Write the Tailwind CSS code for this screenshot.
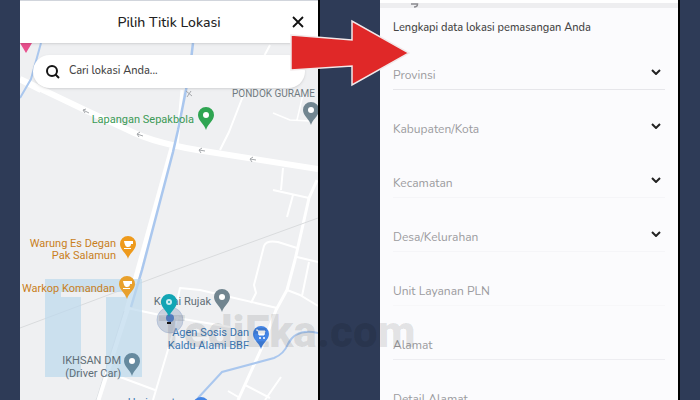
<!DOCTYPE html>
<html lang="id">

<head>
    <meta charset="UTF-8">
    <title>Pilih Titik Lokasi</title>
    <script src="https://cdn.jsdelivr.net/npm/@tailwindcss/browser@4"></script>
</head>

<body class="relative h-screen overflow-hidden bg-[#2e3b57] flex gap-[60px] px-5 font-[Nunito,'Open_Sans',sans-serif]">

    <!-- Map screen -->
    <section class="flex-1 min-w-0 flex flex-col bg-white border-r-2 border-black overflow-hidden">
        <header class="relative z-10 shrink-0 h-[43px] flex items-center justify-between px-3 bg-white border-t border-gray-300 shadow">
            <span class="w-4"></span>
            <h1 class="text-[14px] font-medium text-[#222]">Pilih Titik Lokasi</h1>
            <button type="button" aria-label="Tutup" class="w-4 h-4">
                <svg viewBox="0 0 16 16" class="w-4 h-4" fill="none" stroke="#111" stroke-width="1.8">
                    <path d="M3 3L13 13M13 3L3 13" />
                </svg>
            </button>
        </header>

        <div class="relative flex-1 min-h-0 bg-[#eff0f2]">
            <svg viewBox="20 43 298 357" preserveAspectRatio="xMidYMin slice" class="absolute inset-0 w-full h-full" font-family="Roboto, sans-serif" font-size="11">
                <defs>
                    <path id="pin" d="M0 15C-1.500 9 -8 6 -8 0A8 8 0 1 1 8 0C8 6 1.500 9 0 15Z" />
                    <path id="cup" d="M-4 -3H5V0H3C3 2 2 3 0 3S-3 2 -4 -3ZM-4 4H3V5H-4Z" fill="#fff" />
                </defs>

                <!-- roads -->
                <g fill="none" stroke="#fff" stroke-width="2" stroke-linejoin="round">
                    <path d="M20 79L85 110L128 130Q155 144 210 152L318 169" stroke-width="6" />
                    <path d="M172 148L138 270L127 310L98 400" stroke-width="5" />
                    <path d="M182 90L177 145" stroke-width="3" />
                    <path d="M270 45L243 96L229 132L220 150M283 168L281 190M273 190L309 198M293 195L287 217" />
                    <path d="M317 180L309 198L295 260L287 290L276 310L263 345L238 400" stroke-width="3" />
                    <path d="M297 248L278 242Q266 240 264 246L254 285L256 293L251 303M297 257L318 262" />
                    <path d="M177 302L180 288L200 290L277 308M287 290L300 295L318 306M302 296L309 262" />
                    <path d="M127 308L160 315L230 327M178 316L153 400M120 377L155 390M228 391L240 398M245 385L270 398M281 377L265 400" />
                    <path d="M273 113L290 120L310 121M297 120L304 90M20 82L40 92M290 43L318 60" stroke-width="1.500" />
                </g>
                <path d="M318 218L175 270L20 328" fill="none" stroke="#d9dbdd" />
                <path d="M124 311L96 400" fill="none" stroke="#dfe2e5" />

                <!-- water -->
                <g fill="none" stroke="#aac7ee" stroke-width="2">
                    <path d="M41 43L31 79L20 98" />
                    <path d="M193 43L191 60L186 90L178 130L173 152L142 270L131 307" stroke-width="2.500" />
                    <path d="M198 398L222 372L274 358Q284 354 288 344Q296 328 318 333" />
                </g>

                <!-- one-way arrows -->
                <g fill="none" stroke="#a5a8ac">
                    <path d="M89 113L83 110M86 109L83 110L85 113M143 136L137 134M140 132L137 134L139 137M205 151L199 150M202 148L199 150L201 153M256 160L250 159M253 157L250 159L252 162" />
                    <path d="M186 91L192 96M191 91L187 97" />
                </g>

                <!-- T logo -->
                <path d="M45 279H142V377H106V297H125V292H61V297H81V377H45Z" fill="#bcd9ec" fill-opacity=".7" />

                <path d="M20 43H32L26 53Z" fill="#e8508d" />

                <!-- places -->
                <g text-anchor="end">
                    <text x="194" y="123" fill="#3b9a55">Lapangan Sepakbola</text>
                    <text x="232" y="97" font-size="10" fill="#6f7a80" text-anchor="start">PONDOK GURAME</text>
                    <g fill="#c97f1c">
                        <text x="116" y="247">Warung Es Degan</text>
                        <text x="116" y="259">Pak Salamun</text>
                        <text x="115" y="292">Warkop Komandan</text>
                    </g>
                    <g fill="#5f6e77">
                        <text x="211" y="305">Kedai Rujak</text>
                        <text x="121" y="364">IKHSAN DM</text>
                        <text x="121" y="377">(Driver Car)</text>
                    </g>
                    <g fill="#3c78b4">
                        <text x="249" y="336">Agen Sosis Dan</text>
                        <text x="249" y="349">Kaldu Alami BBF</text>
                        <text x="193" y="406">Harjasantosa</text>
                    </g>
                </g>

                <g transform="translate(206 115)">
                    <use href="#pin" fill="#2fa552" />
                    <circle r="3" fill="#fff" />
                </g>
                <g transform="translate(311 110)">
                    <use href="#pin" fill="#718590" />
                    <circle r="3" fill="#fff" />
                </g>
                <g transform="translate(128 244)">
                    <use href="#pin" fill="#ee9a1c" />
                    <use href="#cup" />
                </g>
                <g transform="translate(127 284)">
                    <use href="#pin" fill="#e8a02c" />
                    <use href="#cup" />
                </g>
                <g transform="translate(222 297)">
                    <use href="#pin" fill="#718590" />
                    <circle r="3" fill="#fff" />
                </g>
                <g transform="translate(132 361)">
                    <use href="#pin" fill="#668a9f" />
                    <circle r="3" fill="#fff" />
                </g>
                <g transform="translate(261 334)">
                    <use href="#pin" fill="#4384e4" />
                    <path d="M-5 -4H-3L-2 1H3L4 -3H-2" fill="#fff" stroke="#fff" />
                    <circle cx="-1" cy="4" r="1" fill="#fff" />
                    <circle cx="3" cy="4" r="1" fill="#fff" />
                </g>
                <use href="#pin" x="201" y="405" fill="#4384e4" />

                <!-- selected point -->
                <circle cx="170" cy="320" r="13" fill="#9aa9c4" fill-opacity=".45" stroke="#a9b9d4" stroke-opacity=".7" />
                <circle cx="170" cy="318" r="4" fill="#5b87cf" />
                <path d="M167 322H171V324H167Z" fill="#151515" />
                <g transform="translate(169 302)">
                    <use href="#pin" fill="#12a5b4" />
                    <circle r="3" fill="#c9eef2" />
                    <circle r="1" fill="#12a5b4" />
                </g>
            </svg>

            <label class="relative mt-3 mx-[13px] h-[33px] flex items-center gap-2 px-3 rounded-full bg-white shadow">
                <svg viewBox="0 0 16 16" class="w-4 h-4 shrink-0" fill="none" stroke="#151515" stroke-width="2">
                    <circle cx="7" cy="7" r="5" />
                    <path d="M10.500 10.500L14 14" />
                </svg>
                <input type="text" aria-label="Cari lokasi" placeholder="Cari lokasi Anda..."
                    class="w-full min-w-0 text-[11px] font-medium placeholder-[#444] focus:outline-none" />
            </label>
        </div>
    </section>

    <!-- Address form -->
    <section class="flex-1 min-w-0 bg-[#fbfbfd] border-r-2 border-black overflow-hidden">
        <div class="h-2 pt-[3px] bg-white">
            <div class="h-[5px] bg-[#eeeef0]">
                <svg viewBox="0 0 8 5" class="ml-[31px] w-2 h-[5px]" fill="none" stroke="#8c8c90" stroke-width="1.500">
                    <path d="M0 1H6.500Q6.500 4 3 4" />
                </svg>
            </div>
        </div>

        <form class="px-[13px] pt-3 text-[12px] text-[#9b9b9f]">
            <h2 class="h-4 leading-4 text-[11px] font-medium text-[#444]">Lengkapi data lokasi pemasangan Anda</h2>

            <div class="mt-6 grid gap-6">
                <div class="relative h-[30px] border-b border-[#e6e6ea]">
                    <select aria-label="Provinsi" class="block w-full h-full appearance-none bg-transparent focus:outline-none">
                        <option>Provinsi</option>
                    </select>
                    <svg viewBox="0 0 10 6" class="absolute right-1 top-[9px] w-[10px] h-[6px] pointer-events-none" fill="none" stroke="#222" stroke-width="2">
                        <path d="M1 1L5 5L9 1" />
                    </svg>
                </div>
                <div class="relative h-[30px] border-b border-transparent">
                    <select aria-label="Kabupaten/Kota" class="block w-full h-full appearance-none bg-transparent focus:outline-none">
                        <option>Kabupaten/Kota</option>
                    </select>
                    <svg viewBox="0 0 10 6" class="absolute right-1 top-[9px] w-[10px] h-[6px] pointer-events-none" fill="none" stroke="#222" stroke-width="2">
                        <path d="M1 1L5 5L9 1" />
                    </svg>
                </div>
                <div class="relative h-[30px] border-b border-[#f5f5f8]">
                    <select aria-label="Kecamatan" class="block w-full h-full appearance-none bg-transparent focus:outline-none">
                        <option>Kecamatan</option>
                    </select>
                    <svg viewBox="0 0 10 6" class="absolute right-1 top-[9px] w-[10px] h-[6px] pointer-events-none" fill="none" stroke="#222" stroke-width="2">
                        <path d="M1 1L5 5L9 1" />
                    </svg>
                </div>
                <div class="relative h-[30px] border-b border-[#f5f5f8]">
                    <select aria-label="Desa/Kelurahan" class="block w-full h-full appearance-none bg-transparent focus:outline-none">
                        <option>Desa/Kelurahan</option>
                    </select>
                    <svg viewBox="0 0 10 6" class="absolute right-1 top-[9px] w-[10px] h-[6px] pointer-events-none" fill="none" stroke="#222" stroke-width="2">
                        <path d="M1 1L5 5L9 1" />
                    </svg>
                </div>
                <input type="text" aria-label="Unit Layanan PLN" placeholder="Unit Layanan PLN"
                    class="w-full h-[30px] border-b border-[#f7f7f9] placeholder-[#9b9b9f] focus:outline-none" />
                <input type="text" aria-label="Alamat" placeholder="Alamat"
                    class="w-full h-[30px] border-b border-[#ededf1] placeholder-[#9b9b9f] focus:outline-none" />
                <input type="text" aria-label="Detail Alamat" placeholder="Detail Alamat"
                    class="w-full h-[30px] border-b border-[#ededf1] placeholder-[#9b9b9f] focus:outline-none" />
            </div>
        </form>
    </section>

    <!-- Arrow from the map to the form -->
    <svg viewBox="0 0 120 68" class="absolute z-20 left-1/2 -ml-[60px] top-[19px] w-[120px] h-[68px] pointer-events-none">
        <path d="M1 16L62 21V2L119 34L62 66V47L1 51Z" fill="#e02828" stroke="#f1e9ea" stroke-width="1.500" />
    </svg>

    <!-- Watermark -->
    <div class="absolute z-20 left-1/2 -ml-[192px] top-[302px] text-[44px] leading-[60px] font-black text-black/10 font-[Roboto,sans-serif] pointer-events-none">TediEka.com</div>

</body>

</html>
